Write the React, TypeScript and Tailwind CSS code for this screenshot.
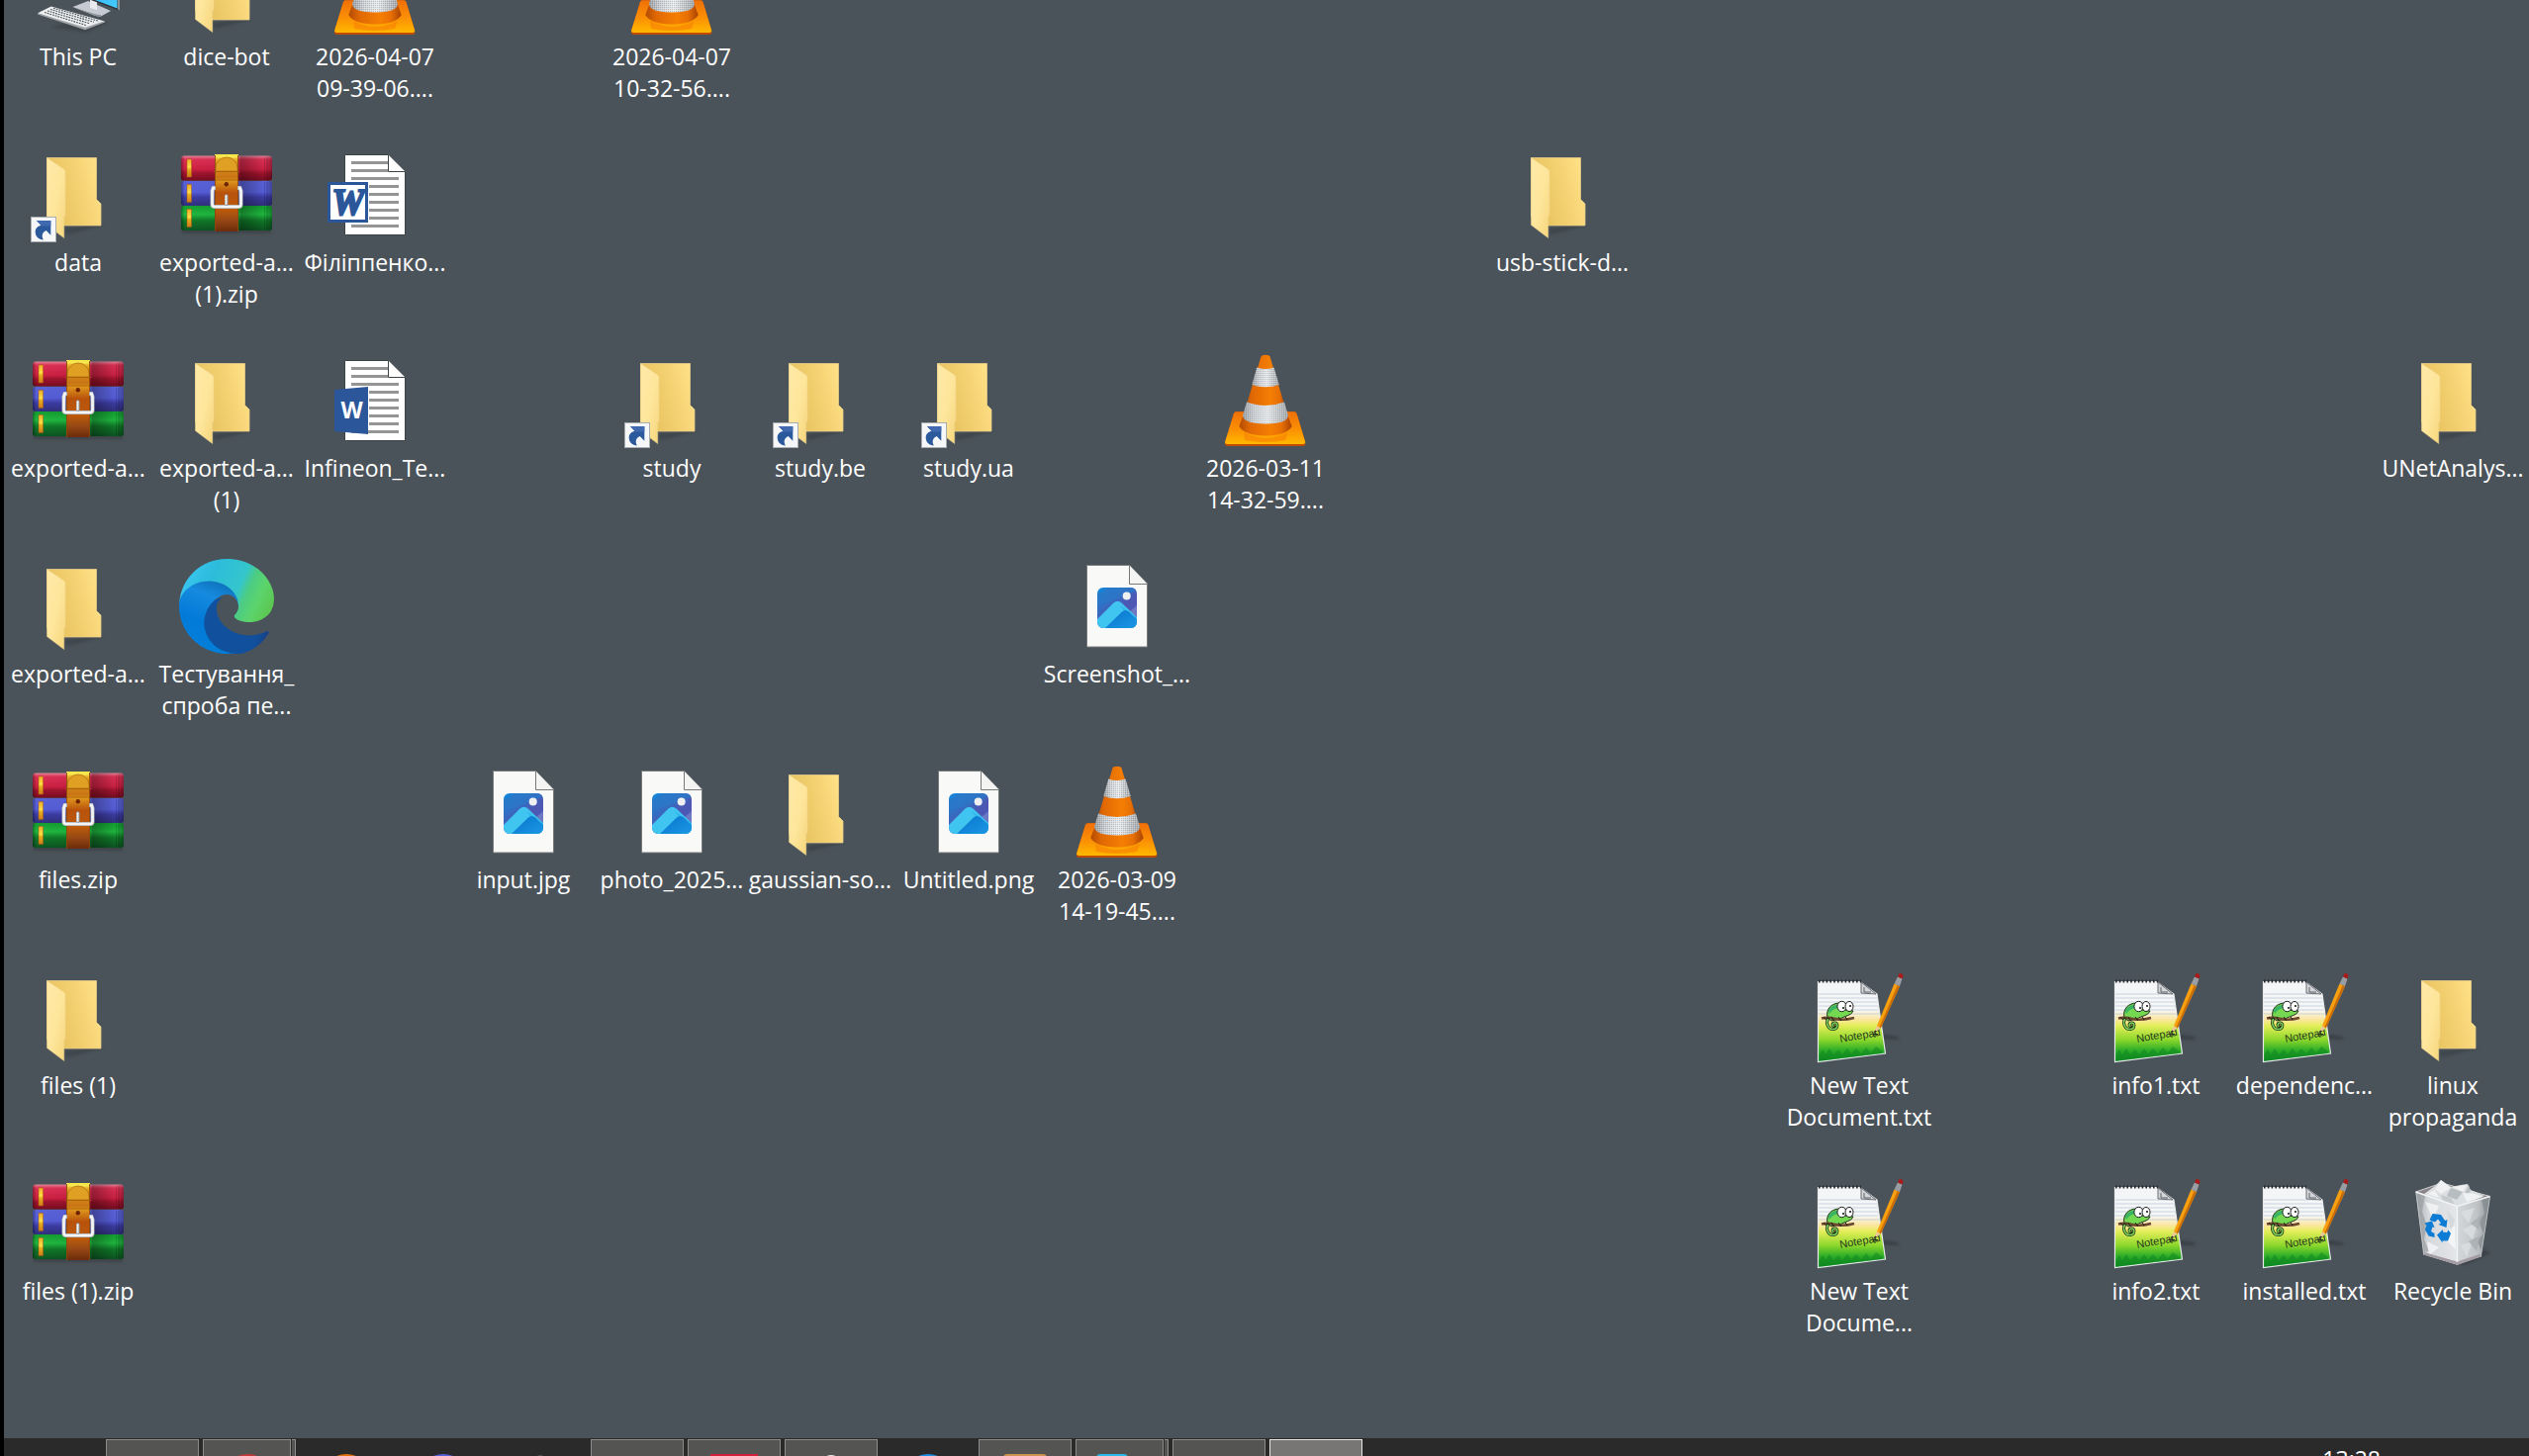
import type { ReactNode } from "react";

type IconKind =
  | "pc"
  | "folder"
  | "shortcut"
  | "archive"
  | "cone"
  | "word"
  | "docx"
  | "edge"
  | "image"
  | "notepad"
  | "bin";

type Item = { kind: IconKind; lines: string[]; place: string };

const items: Item[] = [
  { kind: "pc", lines: ["This PC"], place: "col-start-1 row-start-1" },
  { kind: "folder", lines: ["dice-bot"], place: "col-start-2 row-start-1" },
  { kind: "cone", lines: ["2026-04-07", "09-39-06...."], place: "col-start-3 row-start-1" },
  { kind: "cone", lines: ["2026-04-07", "10-32-56...."], place: "col-start-5 row-start-1" },

  { kind: "shortcut", lines: ["data"], place: "col-start-1 row-start-2" },
  { kind: "archive", lines: ["exported-a...", "(1).zip"], place: "col-start-2 row-start-2" },
  { kind: "word", lines: ["Філіппенко..."], place: "col-start-3 row-start-2" },
  { kind: "folder", lines: ["usb-stick-d..."], place: "col-start-11 row-start-2" },

  { kind: "archive", lines: ["exported-a..."], place: "col-start-1 row-start-3" },
  { kind: "folder", lines: ["exported-a...", "(1)"], place: "col-start-2 row-start-3" },
  { kind: "docx", lines: ["Infineon_Te..."], place: "col-start-3 row-start-3" },
  { kind: "shortcut", lines: ["study"], place: "col-start-5 row-start-3" },
  { kind: "shortcut", lines: ["study.be"], place: "col-start-6 row-start-3" },
  { kind: "shortcut", lines: ["study.ua"], place: "col-start-7 row-start-3" },
  { kind: "cone", lines: ["2026-03-11", "14-32-59...."], place: "col-start-9 row-start-3" },
  { kind: "folder", lines: ["UNetAnalys..."], place: "col-start-17 row-start-3" },

  { kind: "folder", lines: ["exported-a..."], place: "col-start-1 row-start-4" },
  { kind: "edge", lines: ["Тестування_", "спроба пе..."], place: "col-start-2 row-start-4" },
  { kind: "image", lines: ["Screenshot_..."], place: "col-start-8 row-start-4" },

  { kind: "archive", lines: ["files.zip"], place: "col-start-1 row-start-5" },
  { kind: "image", lines: ["input.jpg"], place: "col-start-4 row-start-5" },
  { kind: "image", lines: ["photo_2025..."], place: "col-start-5 row-start-5" },
  { kind: "folder", lines: ["gaussian-so..."], place: "col-start-6 row-start-5" },
  { kind: "image", lines: ["Untitled.png"], place: "col-start-7 row-start-5" },
  { kind: "cone", lines: ["2026-03-09", "14-19-45...."], place: "col-start-8 row-start-5" },

  { kind: "folder", lines: ["files (1)"], place: "col-start-1 row-start-6" },
  { kind: "notepad", lines: ["New Text", "Document.txt"], place: "col-start-13 row-start-6" },
  { kind: "notepad", lines: ["info1.txt"], place: "col-start-15 row-start-6" },
  { kind: "notepad", lines: ["dependenc..."], place: "col-start-16 row-start-6" },
  { kind: "folder", lines: ["linux", "propaganda"], place: "col-start-17 row-start-6" },

  { kind: "archive", lines: ["files (1).zip"], place: "col-start-1 row-start-7" },
  { kind: "notepad", lines: ["New Text", "Docume..."], place: "col-start-13 row-start-7" },
  { kind: "notepad", lines: ["info2.txt"], place: "col-start-15 row-start-7" },
  { kind: "notepad", lines: ["installed.txt"], place: "col-start-16 row-start-7" },
  { kind: "bin", lines: ["Recycle Bin"], place: "col-start-17 row-start-7" },
];

/* Gradients and patterns shared by all the icons on the desktop. */
function IconDefs() {
  return (
    <svg className="absolute size-0" aria-hidden="true">
      <defs>
        <linearGradient id="folderBack" x1="0" y1="0.7" x2="1" y2="0.4">
          <stop offset="0.2" stopColor="#e9c461" />
          <stop offset="0.6" stopColor="#f4d171" />
          <stop offset="1" stopColor="#fee086" />
        </linearGradient>
        <linearGradient id="folderFront" x1="0" y1="0" x2="1" y2="1">
          <stop offset="0" stopColor="#ffe9a6" />
          <stop offset="0.5" stopColor="#fee69c" />
          <stop offset="1" stopColor="#f6d67c" />
        </linearGradient>
        <linearGradient id="bookRed" x1="0" y1="0" x2="0" y2="1">
          <stop offset="0" stopColor="#e8849a" />
          <stop offset="0.15" stopColor="#dc3054" />
          <stop offset="0.55" stopColor="#cc2042" />
          <stop offset="0.7" stopColor="#a0142e" />
          <stop offset="1" stopColor="#780c20" />
        </linearGradient>
        <linearGradient id="bookBlue" x1="0" y1="0" x2="0" y2="1">
          <stop offset="0" stopColor="#5a62d8" />
          <stop offset="0.45" stopColor="#565ed8" />
          <stop offset="0.65" stopColor="#3c3ca4" />
          <stop offset="1" stopColor="#30307c" />
        </linearGradient>
        <linearGradient id="bookGreen" x1="0" y1="0" x2="0" y2="1">
          <stop offset="0" stopColor="#149c30" />
          <stop offset="0.35" stopColor="#20b840" />
          <stop offset="0.6" stopColor="#107828" />
          <stop offset="1" stopColor="#0c5420" />
        </linearGradient>
        <linearGradient id="bookShade" x1="0" y1="0" x2="1" y2="0">
          <stop offset="0" stopColor="#000" stopOpacity="0.35" />
          <stop offset="0.04" stopColor="#000" stopOpacity="0" />
          <stop offset="0.62" stopColor="#000" stopOpacity="0.05" />
          <stop offset="0.66" stopColor="#000" stopOpacity="0.3" />
          <stop offset="0.92" stopColor="#000" stopOpacity="0" />
          <stop offset="1" stopColor="#000" stopOpacity="0.3" />
        </linearGradient>
        <linearGradient id="strap" x1="0" y1="0" x2="0" y2="1">
          <stop offset="0" stopColor="#f8ec50" />
          <stop offset="0.1" stopColor="#e0981c" />
          <stop offset="0.3" stopColor="#c87414" />
          <stop offset="0.34" stopColor="#e0981c" />
          <stop offset="0.5" stopColor="#b8520c" />
          <stop offset="0.72" stopColor="#bc5a0c" />
          <stop offset="0.85" stopColor="#984814" />
          <stop offset="1" stopColor="#6c2c0c" />
        </linearGradient>
        <linearGradient id="gold" x1="0" y1="0" x2="0" y2="1">
          <stop offset="0" stopColor="#f0a828" />
          <stop offset="0.45" stopColor="#fce048" />
          <stop offset="0.55" stopColor="#e8b020" />
          <stop offset="1" stopColor="#d07818" />
        </linearGradient>
        <linearGradient id="coneBase" x1="0" y1="0" x2="0" y2="1">
          <stop offset="0" stopColor="#f07008" />
          <stop offset="0.55" stopColor="#fb9004" />
          <stop offset="1" stopColor="#ffb800" />
        </linearGradient>
        <linearGradient id="coneOrange" x1="0" y1="0" x2="1" y2="0">
          <stop offset="0" stopColor="#b04a04" />
          <stop offset="0.2" stopColor="#e06804" />
          <stop offset="0.6" stopColor="#f57e04" />
          <stop offset="0.8" stopColor="#e87004" />
          <stop offset="1" stopColor="#a84204" />
        </linearGradient>
        <linearGradient id="coneWhite" x1="0" y1="0" x2="1" y2="0">
          <stop offset="0" stopColor="#989ca0" />
          <stop offset="0.25" stopColor="#ccd0d4" />
          <stop offset="0.55" stopColor="#e8eaec" />
          <stop offset="1" stopColor="#a0a4a8" />
        </linearGradient>
        <pattern id="coneMesh" width="2" height="2" patternUnits="userSpaceOnUse">
          <rect width="1" height="1" fill="#6c7074" opacity="0.3" />
          <rect x="1" y="1" width="1" height="1" fill="#fff" opacity="0.3" />
        </pattern>
        <linearGradient id="edgeWave" x1="0" y1="0.5" x2="1" y2="0.6">
          <stop offset="0" stopColor="#10509c" />
          <stop offset="0.8" stopColor="#10509c" />
          <stop offset="1" stopColor="#174088" />
        </linearGradient>
        <linearGradient id="edgeBlue" x1="0.6" y1="0" x2="0.3" y2="1">
          <stop offset="0" stopColor="#0c6cb4" />
          <stop offset="0.25" stopColor="#168ade" />
          <stop offset="0.6" stopColor="#027ad8" />
          <stop offset="1" stopColor="#0480d8" />
        </linearGradient>
        <linearGradient id="edgeTop" x1="0" y1="0.3" x2="1" y2="0.6">
          <stop offset="0" stopColor="#3cc8f4" />
          <stop offset="0.3" stopColor="#2cbcdc" />
          <stop offset="0.62" stopColor="#34c6cc" />
          <stop offset="0.72" stopColor="#4ccc84" />
          <stop offset="0.86" stopColor="#5cd46c" />
          <stop offset="1" stopColor="#5cc854" />
        </linearGradient>
        <linearGradient id="photoSky" x1="0" y1="0" x2="0.7" y2="1">
          <stop offset="0" stopColor="#1088dc" />
          <stop offset="0.35" stopColor="#3070c4" />
          <stop offset="0.6" stopColor="#4c58b4" />
        </linearGradient>
        <linearGradient id="photoHill" x1="0" y1="0" x2="1" y2="1">
          <stop offset="0" stopColor="#0874cc" />
          <stop offset="1" stopColor="#1c98e4" />
        </linearGradient>
        <linearGradient id="noteSheet" x1="0" y1="0" x2="0" y2="1">
          <stop offset="0" stopColor="#f4f4f6" />
          <stop offset="0.35" stopColor="#f6f8f8" />
          <stop offset="0.47" stopColor="#fbe6a0" />
          <stop offset="0.55" stopColor="#e4ee58" />
          <stop offset="0.72" stopColor="#8ed82c" />
          <stop offset="0.86" stopColor="#2cac28" />
          <stop offset="1" stopColor="#0c8c24" />
        </linearGradient>
        <linearGradient id="binLeft" x1="0" y1="0" x2="1" y2="0">
          <stop offset="0" stopColor="#a8acb0" />
          <stop offset="0.3" stopColor="#d6d9dc" />
          <stop offset="1" stopColor="#e4e6e8" />
        </linearGradient>
        <linearGradient id="binRight" x1="0" y1="0" x2="1" y2="0">
          <stop offset="0" stopColor="#d4d7d9" />
          <stop offset="0.6" stopColor="#c0c4c6" />
          <stop offset="1" stopColor="#90969a" />
        </linearGradient>
        <linearGradient id="pcScreen" x1="0" y1="0" x2="1" y2="1">
          <stop offset="0" stopColor="#0c8ce0" />
          <stop offset="1" stopColor="#48ccfc" />
        </linearGradient>
        <filter id="soft" x="-50%" y="-50%" width="200%" height="200%">
          <feGaussianBlur stdDeviation="1.5" />
        </filter>
      </defs>
    </svg>
  );
}

function Folder() {
  return (
    <>
      <path d="M34 82L70 78L75 76L70 80L36 88Z" fill="#20282c" opacity="0.3" filter="url(#soft)" />
      <path
        d="M16.5 10.5H66.5V52.5L71 57V79H30L16.5 70Z"
        fill="url(#folderBack)"
        stroke="#e6cd88"
        strokeWidth="0.8"
      />
      <path
        d="M16.5 10.5L33.6 22Q35 23 35 25V68L33.7 71V91.5L16.5 78.5Z"
        fill="url(#folderFront)"
        stroke="#f0d690"
        strokeWidth="0.5"
      />
    </>
  );
}

function ShortcutMark() {
  return (
    <g transform="translate(0 70)">
      <rect x="0.5" y="0.5" width="25" height="25" fill="#f6f7f8" stroke="#a9adb0" />
      <path
        d="M6 4H20.3V18.7L15.7 14C12 15.5 10.5 19 12.8 23.5C8 23 4.7 20 4.7 15.5C4.7 12 7 9.5 10.5 8.7Z"
        fill="#2b5a9c"
      />
      <path d="M6 4H20.3V9.5H9.5L10.5 8.7Z" fill="#4169b0" />
    </g>
  );
}

function Archive() {
  const books = [
    { y: 8.5, fill: "url(#bookRed)" },
    { y: 34, fill: "url(#bookBlue)" },
    { y: 59, fill: "url(#bookGreen)" },
  ];
  return (
    <>
      <rect x="3" y="80" width="90" height="7" fill="#20282c" opacity="0.35" filter="url(#soft)" />
      {books.map((b) => (
        <g key={b.y}>
          <rect x="2" y={b.y} width="92" height="25" rx="3" fill={b.fill} />
          <rect x="2" y={b.y} width="92" height="25" rx="3" fill="url(#bookShade)" />
          <rect x="8" y={b.y + 3.5} width="4.5" height="18" fill="url(#gold)" stroke="#a85c10" strokeWidth="0.5" />
          <path d={`M86.5 ${b.y + 1}v23M89 ${b.y + 1}v23`} stroke="#000" strokeWidth="0.6" opacity="0.3" />
        </g>
      ))}
      <rect x="36" y="7" width="24" height="78" rx="1" fill="url(#strap)" />
      <path d="M36 7H60V10.5H36Z" fill="#f6e84c" />
      <path d="M37 24V21a11 11 0 0 1 22 0V24Z" fill="#e0a024" stroke="#b06c14" strokeWidth="0.7" />
      <path d="M35 24.5H61M36 33H60" stroke="#a8600f" strokeWidth="0.9" />
      <path d="M36.5 8V85M59.5 8V85" stroke="#8c4a0c" strokeWidth="0.9" />
      <circle cx="47.8" cy="37.3" r="2.2" fill="#6c2404" />
      <path
        d="M37 41H34.5L33.5 44V57.5Q33.500 60 36 60H60Q62.500 60 62.500 57.500V44L61.500 41H59"
        fill="none"
        stroke="#aeb2b6"
        strokeWidth="4"
      />
      <path
        d="M36 41H34.500L33.500 44V57.500Q33.500 60 36 60H60Q62.500 60 62.500 57.500V44L61.500 41H60"
        fill="none"
        stroke="#f4f4f4"
        strokeWidth="2.600"
      />
      <path d="M47.800 49V57" stroke="#8c9094" strokeWidth="3.500" strokeLinecap="round" />
      <path d="M47.500 49V57" stroke="#f0f0f0" strokeWidth="2" strokeLinecap="round" />
    </>
  );
}

function WordSheet() {
  return (
    <>
      <path d="M17.5 7.5H61.5L78.5 24.5V88.5H17.5Z" fill="#fff" stroke="#3c4446" strokeWidth="1" />
      <path d="M61.5 7.5V24.5H78.5" fill="#fff" stroke="#3c4446" strokeWidth="1" />
      <path
        d="M24 15.5H61M24 23.5H61M24 31.5H72M42 39.5H72M42 47.5H72M42 55.5H72M42 63.5H72M42 71.5H72M24 79.5H72"
        stroke="#959595"
        strokeWidth="3"
      />
    </>
  );
}

function WordLegacy() {
  return (
    <>
      <WordSheet />
      <rect x="1.5" y="36.5" width="38" height="38" fill="#fff" stroke="#2b579a" strokeWidth="3" />
      <text
        x="21"
        y="68"
        textAnchor="middle"
        fontFamily="Liberation Serif, serif"
        fontStyle="italic"
        fontWeight="700"
        fontSize="37"
        fill="#2b579a"
        stroke="#2b579a"
        strokeWidth="2.2"
      >
        W
      </text>
    </>
  );
}

function WordModern() {
  return (
    <>
      <WordSheet />
      <path d="M7 37L41 34V82L7 79Z" fill="#2b579a" />
      <text
        x="24.5"
        y="66"
        textAnchor="middle"
        fontFamily="Open Sans, sans-serif"
        fontWeight="700"
        fontSize="23"
        fill="#fff"
      >
        W
      </text>
    </>
  );
}

function ImageFile() {
  return (
    <>
      <path d="M17.5 6.5H60.5L78.5 25V89H17.5Z" fill="#f9f9f8" stroke="#767a7a" />
      <path d="M60.5 6.5V25.5H78.5" fill="#f4f4f3" stroke="#767a7a" />
      <svg x="28" y="29" width="40" height="41" viewBox="0 0 40 41">
        <clipPath id="photoClip">
          <rect width="40" height="41" rx="6" />
        </clipPath>
        <g clipPath="url(#photoClip)">
          <rect width="40" height="41" fill="url(#photoSky)" />
          <path d="M0 17Q18 14 40 3V0H10Q6 5 0 7Z" fill="#2c78c8" opacity="0.7" />
          <path d="M33 24L40 18V30Z" fill="#6c78c4" />
          <path d="M16.5 15.5Q20.5 12 24.5 15.5L40 30V41H0V32Z" fill="#40c4f0" />
          <path d="M27 24L23 18L40 31V37Z" fill="#30b4ec" />
          <path d="M8 41L25 24.5Q28.5 21.5 32 24.5L40 32V41Z" fill="url(#photoHill)" />
          <circle cx="29.7" cy="8.5" r="4" fill="#f0f0f2" />
        </g>
      </svg>
    </>
  );
}

function Cone() {
  return (
    <>
      <path
        d="M18.5 59.3H77Q79 59.3 79.5 61L88.3 90V92Q88.3 94 86 94H9.5Q7 94 7 92V90L16 61Q16.5 59.3 18.5 59.3Z"
        fill="#c04c04"
      />
      <path
        d="M18.5 59.3H77Q79 59.3 79.5 61L88.3 90Q88.3 92 86 92H9.5Q7 92 7 90L16 61Q16.5 59.3 18.5 59.3Z"
        fill="url(#coneBase)"
      />
      <path d="M26 80Q48 92 71 80L68 88Q48 92 27 88Z" fill="#f88404" opacity="0.7" />
      <path d="M25 64L21.3 74Q26 83 48 83.5Q70 83 74.7 74L71 64Z" fill="url(#coneOrange)" />
      <path
        d="M43.5 3.5Q44 1.7 48 1.7Q52 1.7 52.5 3.5L71 65Q64 71 48 71Q32 71 25 65Z"
        fill="url(#coneOrange)"
      />
      <path d="M39.3 14.5Q48 17.5 56.5 14.5L61.8 32Q48 36.5 34.3 32Z" fill="url(#coneWhite)" />
      <path d="M39.3 14.5Q48 17.5 56.5 14.5L61.8 32Q48 36.5 34.3 32Z" fill="url(#coneMesh)" />
      <path d="M29 49.5Q48 56.5 67 49.5L71 63Q70 71.5 48 71.5Q26 71.5 25 63Z" fill="url(#coneWhite)" />
      <path d="M29 49.5Q48 56.5 67 49.5L71 63Q70 71.5 48 71.5Q26 71.5 25 63Z" fill="url(#coneMesh)" />
    </>
  );
}

function EdgeLogo() {
  return (
    <svg width="96" height="96" viewBox="0 0 256 256">
      <path
        d="M231 190.5c-3.4 1.8-6.9 3.4-10.5 4.7a101.7 101.7 0 0 1-35.9 6.4c-47.3 0-88.5-32.5-88.5-74.3a31.5 31.5 0 0 1 16.4-27.3c-42.8 1.8-53.8 46.4-53.8 72.5 0 74 68.1 81.4 82.8 81.4 7.9 0 19.8-2.3 27-4.6l1.3-.4a128.3 128.3 0 0 0 66.6-52.8 4 4 0 0 0-5.4-5.6z"
        transform="translate(4.6 5)"
        fill="url(#edgeWave)"
      />
      <path
        d="M105.7 253.4a79.2 79.2 0 0 1-22.7-21.3 80.7 80.7 0 0 1 29.5-120c3.2-1.5 8.5-4.1 15.6-4a32.4 32.4 0 0 1 25.7 13 31.9 31.9 0 0 1 6.3 18.7c0-.2 24.5-79.6-80-79.6-43.9 0-80 41.6-80 78.2a130.2 130.2 0 0 0 12.1 56 128 128 0 0 0 156.4 67 75.5 75.5 0 0 1-62.8-8z"
        transform="translate(0 -12)"
        fill="url(#edgeBlue)"
      />
      <path
        d="M152.3 148.9c-.9 1-3.4 2.5-3.4 5.6 0 2.6 1.7 5.2 4.8 7.3 14.3 10 41.4 8.6 41.5 8.6a59.6 59.6 0 0 0 30.3-8.3 61.4 61.4 0 0 0 30.4-52.9c.3-22.4-8-37.3-11.3-43.9C223.5 23.9 177.7 0 128 0A128 128 0 0 0 0 126.2c.5-36.5 36.8-66 80-66 3.5 0 23.5.3 42 10a72.6 72.6 0 0 1 30.9 29.3c6.1 10.6 7.2 24.1 7.2 29.5s-2.7 13.3-7.8 19.9z"
        fill="url(#edgeTop)"
      />
    </svg>
  );
}

function Notepad() {
  return (
    <>
      <path d="M66 64L86 67Q92 69 84 70L70 69Z" fill="#20282c" opacity="0.45" filter="url(#soft)" />
      <path d="M6.5 11.5H49L66 24L74.5 84L6.5 92.5Z" fill="url(#noteSheet)" stroke="#e8eaec" strokeWidth="1.2" />
      <path
        d="M7 24H60M7 28H66M7 32H66M7 36H67M7 40H67M7 44H68"
        stroke="#a8b8cc"
        strokeWidth="0.8"
        opacity="0.7"
      />
      <path d="M7 11H50" stroke="#24282c" strokeWidth="3" strokeDasharray="1.6 2.2" />
      <path d="M50 12V23L65 24Z" fill="#d4d6da" stroke="#5c6064" strokeWidth="0.9" />
      <path d="M53 17V22H60" fill="none" stroke="#5c6064" strokeWidth="1" />
      <path
        d="M7.5 85L11 80L14 85L18 79L22 85L27 80L31 85L36 79L40 84L45 79L50 84L55 78L60 83L65 77L72 82V84L7.5 91.5Z"
        fill="#0c8020"
        opacity="0.45"
      />
      <path
        d="M16 48C14 39 20 33 29 33L33 40L42 41C40 46 33 46 29 49L20 51Z"
        fill="#74d850"
        stroke="#1c2c18"
        strokeWidth="1"
      />
      <path d="M17 40Q21 34.5 27 35L26 38Q20 40 18 44Z" fill="#38b464" />
      <path d="M10 48.5Q16 47 24 49T43 48" fill="none" stroke="#6c4830" strokeWidth="2.6" />
      <path d="M12 47.5L15 50M20 47L22 51M27 47L30 51M34 47L36 50" stroke="#241c14" strokeWidth="1" />
      <path
        d="M16.500 49C14 54 17 60 22 59.500C27 59 27 52.500 23 53C20.500 53.500 20.500 56.500 22.500 56.500"
        fill="none"
        stroke="#1c2c18"
        strokeWidth="3"
        strokeLinecap="round"
      />
      <path
        d="M16.500 49C14 54 17 60 22 59.500C27 59 27 52.500 23 53C20.500 53.500 20.500 56.500 22.500 56.500"
        fill="none"
        stroke="#7cd45c"
        strokeWidth="1.500"
      />
      <ellipse cx="30.5" cy="36.5" rx="4.6" ry="5.2" fill="#fff" stroke="#181c18" strokeWidth="1" />
      <ellipse cx="38" cy="36.5" rx="4" ry="5" fill="#fff" stroke="#181c18" strokeWidth="1" />
      <circle cx="32" cy="38" r="1.1" fill="#181c18" />
      <circle cx="39" cy="36" r="1.1" fill="#181c18" />
      <text
        x="29"
        y="73"
        fontFamily="Liberation Sans Narrow, Liberation Sans, sans-serif"
        fontSize="11"
        fill="#26381c"
        transform="rotate(-10 29 73)"
      >
        Notepad
      </text>
      <path d="M64 61v7M61 64.500h6" stroke="#26381c" strokeWidth="1" />
      <path d="M66 56L62.500 64L69.500 58.500Z" fill="#ecc898" />
      <path d="M64 60.500L62.500 64L66 61.500Z" fill="#302820" />
      <path d="M83.500 13.500L66 56L69.800 58.500L89 16Z" fill="#f8a010" />
      <path d="M86.800 15L68.500 57.500L69.800 58.500L89 16Z" fill="#c86c08" />
      <path d="M87 6.500L83.500 13.500L89 16L91.500 8.500Z" fill="#9a9ea2" />
      <path d="M88.500 3Q91.500 2.500 92.500 5L91.500 8.500L87 6.500Z" fill="#a81c1c" />
    </>
  );
}

function RecycleBin() {
  return (
    <>
      <path d="M50 86L80 74L86 78L60 90Z" fill="#20282c" opacity="0.4" filter="url(#soft)" />
      <path d="M10.5 16L37 7L85.5 20.5L52.5 30.5Z" fill="#8a8488" stroke="#d0d4d6" strokeWidth="1" />
      <path d="M10.5 16L52.5 30.5V89.7L18.7 79.5Z" fill="url(#binLeft)" />
      <path d="M85.5 20.5L52.5 30.5V89.7L76.3 81.5Z" fill="url(#binRight)" />
      <path d="M11.5 17L20 20L17 36L22 50L19 64L24 76L18.5 77Z" fill="#8c9296" opacity="0.55" />
      <path d="M85 21L77 24L80 38L74 46L79 58L73 66L77 76L80 60Z" fill="#7c8488" opacity="0.6" />
      <path d="M20 26L34 30L28 44ZM36 60L50 50L51 74ZM22 66L34 72L24 80Z" fill="#fff" opacity="0.6" />
      <path d="M42 34L50 44L46 56ZM20 44L30 38L24 60Z" fill="#d0d4d6" opacity="0.7" />
      <path d="M56 36L70 32L64 48ZM58 54L74 46L68 64ZM56 70L68 66L62 82Z" fill="#dcdfe1" opacity="0.8" />
      <path d="M66 48L78 38L74 54ZM64 66L76 60L72 76Z" fill="#a8adb0" opacity="0.8" />
      <path d="M19 18L30 10L36 4L46 11L56 9L63 8L66 14L80 20L64 27L52 30L40 27L26 22Z" fill="#dcdfe1" />
      <path d="M36 4L46 12L36 18L30 13ZM48 11L62 9L58 16ZM22 18L30 14L34 22Z" fill="#f0f1f2" />
      <path d="M46 12L58 16L52 24L42 20ZM64 9L66 16L60 18Z" fill="#b8bdc1" />
      <path d="M58 17L70 18L78 21L62 26Z" fill="#f0f1f2" />
      <path d="M36 19L46 22L50 29L38 25Z" fill="#c6cacd" />
      <path d="M18.7 77L52.5 86.5L76.5 78.5L76.3 81.5L52.5 89.7L18.7 79.5Z" fill="#a39ca2" />
      <path d="M10.5 16L52.5 30.5L85.5 20.5" fill="none" stroke="#f2f3f4" strokeWidth="1.4" />
      <path d="M11 17L18.7 79.5M85.5 21L76.3 81.5" stroke="#c4c8ca" strokeWidth="0.9" />
      <path d="M52.5 31V87" stroke="#f4f5f6" strokeWidth="1.3" />
      <g fill="#0c7cd4">
        <path d="M24.5 44.5L27.5 38L36 39L40 45L42.5 44L41.5 52L33.5 49L36 47.5L33 43.5L30 46.5Z" />
        <path d="M19.5 47.5L27 45.5L29.5 52L27.5 51.5L26 56L29.5 58V62L23.5 60.5L20 54L21.5 50Z" />
        <path d="M32 59.5L38 54L38 56.5L42 57L43.5 54.5L46 58L43 65.5L37.5 65.5V67.5Z" />
      </g>
    </>
  );
}

function ThisPc() {
  return (
    <>
      <path d="M20 86L56 92L78 82L60 78Z" fill="#20282c" opacity="0.3" filter="url(#soft)" />
      <path d="M42.5 66L58 60L81 70L71 75.5Q68 76 64 74.5Z" fill="#c6cad2" />
      <path d="M42.5 66L64 74.5Q68 76 71 75.5V74Q68 74 64 73Z" fill="#8c9098" />
      <path d="M60 58V67L67 69V60Z" fill="#e8eaee" />
      <path d="M20 12L89.5 24V69.5L20 44Z" fill="#2a3034" />
      <path d="M21 14L87.5 26V67.5L21 42.5Z" fill="url(#pcScreen)" />
      <path d="M88 24L90 24.5V69.5L88 68.5Z" fill="#8a9094" />
      <path d="M7 72.3L20.7 65.5L75 80.5L55 88.5Z" fill="#eceef0" />
      <path d="M7 72.3L55 86.8L75 80V81.5L55 89.2L7 73.5Z" fill="#a0a4a8" />
      <path
        d="M14 71.5L56 84.5M17 70L60 82.8M20 68.5L64 81.3M23 67.2L69 80.3"
        stroke="#4c5458"
        strokeWidth="1.1"
        strokeDasharray="1.8 1"
      />
    </>
  );
}

const drawings: Record<IconKind, ReactNode> = {
  pc: <ThisPc />,
  folder: <Folder />,
  shortcut: (
    <>
      <Folder />
      <ShortcutMark />
    </>
  ),
  archive: <Archive />,
  cone: <Cone />,
  word: <WordLegacy />,
  docx: <WordModern />,
  edge: <EdgeLogo />,
  image: <ImageFile />,
  notepad: <Notepad />,
  bin: <RecycleBin />,
};

function DesktopIcon({ item }: { item: Item }) {
  return (
    <button type="button" className={`flex flex-col items-center self-start ${item.place}`}>
      <svg viewBox="0 0 96 96" className="size-24 shrink-0" aria-hidden="true">
        {drawings[item.kind]}
      </svg>
      <span className="mt-1 flex flex-col items-center text-[23px] leading-8 whitespace-nowrap">
        {item.lines.map((line) => (
          <span key={line}>{line}</span>
        ))}
      </span>
    </button>
  );
}

type Task = { label: string; state: "idle" | "open" | "stacked" | "active"; glyph?: string };

const tasks: Task[] = [
  { label: "Window 1", state: "open" },
  { label: "Window 2", state: "stacked", glyph: "size-12 rounded-full bg-[#c43a3c]" },
  { label: "Window 3", state: "idle", glyph: "size-12 rounded-full bg-[#e0700c]" },
  { label: "Window 4", state: "idle", glyph: "size-12 rounded-full bg-[#5560d8]" },
  { label: "Window 5", state: "idle", glyph: "mt-px size-3 rounded-full bg-[#505050]" },
  { label: "Window 6", state: "open" },
  { label: "Window 7", state: "open", glyph: "size-12 bg-[#d0203c]" },
  { label: "Window 8", state: "open", glyph: "mt-px size-5 rounded-full bg-[#e4eeec]" },
  { label: "Window 9", state: "idle", glyph: "size-12 rounded-full bg-[#1c8ce0]" },
  { label: "Window 10", state: "open", glyph: "h-12 w-11 rounded-t-sm bg-[#cc9450]" },
  { label: "Window 11", state: "stacked", glyph: "mr-4 h-12 w-8 rounded-t-sm bg-[#2cb8ec]" },
  { label: "Window 12", state: "open" },
  { label: "Window 13", state: "active" },
];

const taskStyles = {
  idle: "border-transparent",
  open: "border-[#8c8c8a] bg-[#545452]",
  stacked: "border-[#8c8c8a] bg-[#545452]",
  active: "border-[#e4e4e2] bg-[#787674]",
};

function TaskButton({ task }: { task: Task }) {
  return (
    <div className="flex w-[94px] gap-px">
      <button
        type="button"
        aria-label={task.label}
        className={`flex h-[70px] flex-1 justify-center border pt-[14px] ${taskStyles[task.state]}`}
      >
        {task.glyph && <span className={`block ${task.glyph}`} />}
      </button>
      {task.state === "stacked" && (
        <span className="h-[70px] w-1 border border-l-0 border-[#8c8c8a] bg-[#545452]" />
      )}
    </div>
  );
}

export default function App() {
  return (
    <div className="flex h-screen flex-col overflow-hidden border-l-4 border-black bg-[#4b535a] font-['Open_Sans','Noto_Sans',sans-serif] text-white">
      <IconDefs />
      <main className="min-h-0 flex-1 overflow-hidden">
        <div className="-mt-[59px] grid auto-rows-[208px] grid-cols-[repeat(17,150px)]">
          {items.map((item) => (
            <DesktopIcon key={item.place} item={item} />
          ))}
        </div>
      </main>
      <footer className="flex h-[18px] shrink-0 items-start justify-between overflow-hidden bg-[#2a2a2a] pt-px">
        <nav aria-label="Taskbar" className="ml-[103px] flex gap-1">
          {tasks.map((task) => (
            <TaskButton key={task.label} task={task} />
          ))}
        </nav>
        <time className="mt-1 mr-[150px] text-[23px] leading-8">13:28</time>
      </footer>
    </div>
  );
}
